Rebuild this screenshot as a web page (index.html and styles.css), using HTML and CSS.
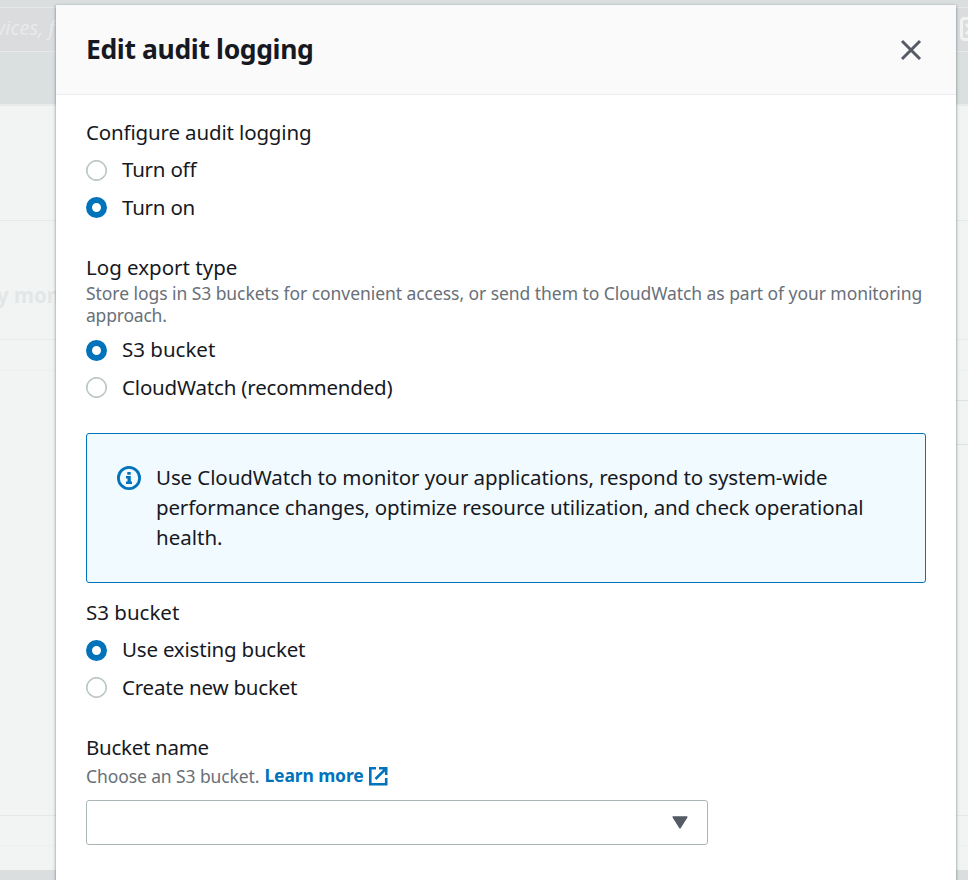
FILE: index.html
```html
<!DOCTYPE html>
<html lang="en">
<head>
<meta charset="utf-8">
<title>Edit audit logging</title>
<link rel="stylesheet" href="styles.css">
</head>
<body>
<div class="page" aria-hidden="true">
  <div class="page-top"></div>
  <div class="page-search"><span class="page-placeholder">vices, f</span>
    <svg class="page-shell" viewBox="0 0 24 24" width="24" height="24"><rect x="1.5" y="1.5" width="21" height="21" rx="3"/><path d="M6 7l5 5-5 5"/></svg>
  </div>
  <div class="page-nav"></div>
  <div class="page-intro"></div>
  <div class="page-title"><span>y mon</span></div>
  <div class="page-row row-a"></div>
  <div class="page-row row-b"></div>
  <div class="page-row row-c"></div>
  <div class="page-row row-d"></div>
  <div class="page-row row-e"></div>
  <div class="page-row row-f"></div>
  <div class="page-footer"></div>
</div>
<div class="dialog" role="dialog" aria-labelledby="title">
  <header class="dialog-header">
    <h1 id="title">Edit audit logging</h1>
    <svg class="close" viewBox="0 0 24 24" width="24" height="24"><path d="M3 3l18 18M21 3L3 21"/></svg>
  </header>
  <div class="dialog-body">
    <section class="group">
      <div class="label"><span class="t-configure">Configure audit logging</span></div>
      <div class="option"><i class="radio"></i><span class="t-turn">Turn off</span></div>
      <div class="option"><i class="radio checked"></i><span class="t-turn">Turn on</span></div>
    </section>
    <section class="group export">
      <div class="label"><span>Log export type</span></div>
      <div class="hint"><span class="t-hint">Store logs in S3 buckets for convenient access, or send them to CloudWatch as part of your monitoring</span><br><span class="t-approach">approach.</span></div>
      <div class="option"><i class="radio checked"></i><span>S3 bucket</span></div>
      <div class="option"><i class="radio"></i><span class="t-cloudwatch">CloudWatch (recommended)</span></div>
    </section>
    <div class="alert">
      <svg class="info" viewBox="0 0 24 24" width="24" height="24"><circle cx="12" cy="12" r="10.6"/><path d="M10.3 6h3.4v2.8h-3.4zM9 10h4.8v5.6H15V18H9v-2.4h1.5v-3.2H9z"/></svg>
      <p><span class="t-line1">Use CloudWatch to monitor your applications, respond to system-wide</span><br><span class="t-line2">performance changes, optimize resource utilization, and check operational</span><br><span>health.</span></p>
    </div>
    <section class="group bucket">
      <div class="label"><span>S3 bucket</span></div>
      <div class="option"><i class="radio checked"></i><span class="t-bucket">Use existing bucket</span></div>
      <div class="option"><i class="radio"></i><span class="t-bucket">Create new bucket</span></div>
    </section>
    <section class="group">
      <div class="label"><span class="t-name">Bucket name</span></div>
      <div class="hint choose"><span class="t-choose">Choose an S3 bucket.</span><a class="learn"><span class="t-learn">Learn more</span><svg viewBox="0 0 20 20" width="20" height="20"><path d="M8 2.3H2.3v15.9h15.9V12M11 2.3h7.2V9M17.7 2.8L7.5 13"/></svg></a></div>
      <div class="select"><svg viewBox="0 0 16 13" width="16" height="13"><path d="M1.2 1h13.6L8 11.8z"/></svg></div>
    </section>
  </div>
</div>
</body>
</html>
```

FILE: styles.css
```css
* { box-sizing: border-box; }
html, body { margin: 0; height: 880px; overflow: hidden; }
body { font: 20.5px/30px "Noto Sans", "Open Sans", sans-serif; color: #16191f; background: #f2f4f4; }
span { white-space: nowrap; }

.page { height: 880px; display: flex; flex-direction: column; overflow: hidden; }
.page > div { flex: none; }
.page-top { height: 7px; background: #dadedf; }
.page-search { height: 45px; background: #dbdcde; border-top: 1px solid #e6e9e9; border-bottom: 1px solid #e6e9e9; display: flex; align-items: center; justify-content: space-between; }
.page-placeholder { font-style: italic; font-size: 20px; color: #e8eaea; margin-left: -4px; padding-bottom: 4px; }
.page-shell { flex: none; margin-right: -16px; margin-bottom: 2px; fill: none; stroke: #f0f2f2; stroke-width: 3; }
.page-nav { height: 54px; background: #dadfdf; border-bottom: 2px solid #e8ebec; }
.page-intro { height: 115px; border-bottom: 1px solid #e6e9e9; }
.page-title { height: 119px; padding-top: 59px; font-weight: 700; color: #e3e6e7; border-bottom: 1px solid #e9ebeb; }
.page-title span { margin-left: -3px; }
.page-row { border-bottom: 1px solid #e6e8e8; }
.row-a { height: 31px; border-color: #edf0f0; }
.row-b { height: 30px; border-color: #dfe2e2; }
.row-c { height: 44px; border-color: #dfe2e2; }
.row-b, .row-c { margin-left: 900px; }
.row-d { height: 371px; }
.row-e { height: 30px; border-color: #edf0f0; }
.row-f { height: 24px; border: 0; }
.page-footer { height: 10px; background: #dadedf; }

.dialog { position: absolute; top: 5px; left: 56px; width: 900px; height: 900px; background: #fff; box-shadow: 0 1px 3px rgba(60, 80, 85, .7); }
.dialog-header { height: 90px; background: #fafafa; border-bottom: 1px solid #eaeded; padding: 0 33px 0 30px; display: flex; align-items: center; justify-content: space-between; }
h1 { margin: 0; font-size: 26.5px; line-height: 36px; font-weight: 700; letter-spacing: -.36px; padding-bottom: 1px; }
.close { fill: none; stroke: #545b64; stroke-width: 3; }
.dialog-body { padding: 23px 30px 0; }
.group { margin-bottom: 26.5px; }
.label { height: 30px; line-height: 28px; margin-bottom: 3.5px; }
.option { height: 37.5px; display: flex; align-items: center; gap: 15px; }
.option span { padding-bottom: 2px; }
.radio { width: 21px; height: 21px; border: 1.5px solid #aab7b8; border-radius: 50%; background: #fff; box-shadow: inset 0 0 0 .5px #aab7b8; }
.radio.checked { border: 6px solid #0073bb; box-shadow: none; }
.hint { font-size: 17.5px; line-height: 22px; color: #687078; }
.export .label { margin-bottom: -1px; }
.export .hint { margin-bottom: 5.5px; }
.alert { height: 150px; padding: 28px 29px; border: 1px solid #0073bb; border-radius: 3px; background: #f1faff; display: flex; gap: 15px; margin-bottom: 15px; }
.alert p { margin: 0; }
.info { flex: none; margin: 4px 0 0 1px; stroke: #0073bb; fill: none; stroke-width: 2.8; }
.info path { stroke: none; fill: #0073bb; }
.choose { display: flex; margin-top: -2px; align-items: center; gap: 5px; height: 22px; margin-bottom: 13px; }
.learn { display: flex; align-items: center; gap: 4px; font-weight: 700; color: #0073bb; }
.learn span { padding-bottom: 1px; }
.learn svg { fill: none; stroke: #0073bb; stroke-width: 2.6; }
.select { width: 622px; height: 45px; border: 1px solid #aab7b8; border-radius: 3px; display: flex; align-items: center; justify-content: flex-end; padding-right: 19px; }
.select svg { fill: #545b64; stroke: #545b64; stroke-width: 1.5; stroke-linejoin: round; margin-top: 1px; }

.t-configure { letter-spacing: -.15px; }
.t-turn { letter-spacing: -.22px; }
.t-hint { letter-spacing: -.06px; }
.t-approach { letter-spacing: -.2px; }
.t-cloudwatch { letter-spacing: -.18px; }
.t-line1 { letter-spacing: -.1px; }
.t-line2 { letter-spacing: -.155px; }
.t-bucket { letter-spacing: -.2px; }
.t-name { letter-spacing: -.28px; }
.t-choose { letter-spacing: -.1px; }
.t-learn { letter-spacing: -.12px; }
```
